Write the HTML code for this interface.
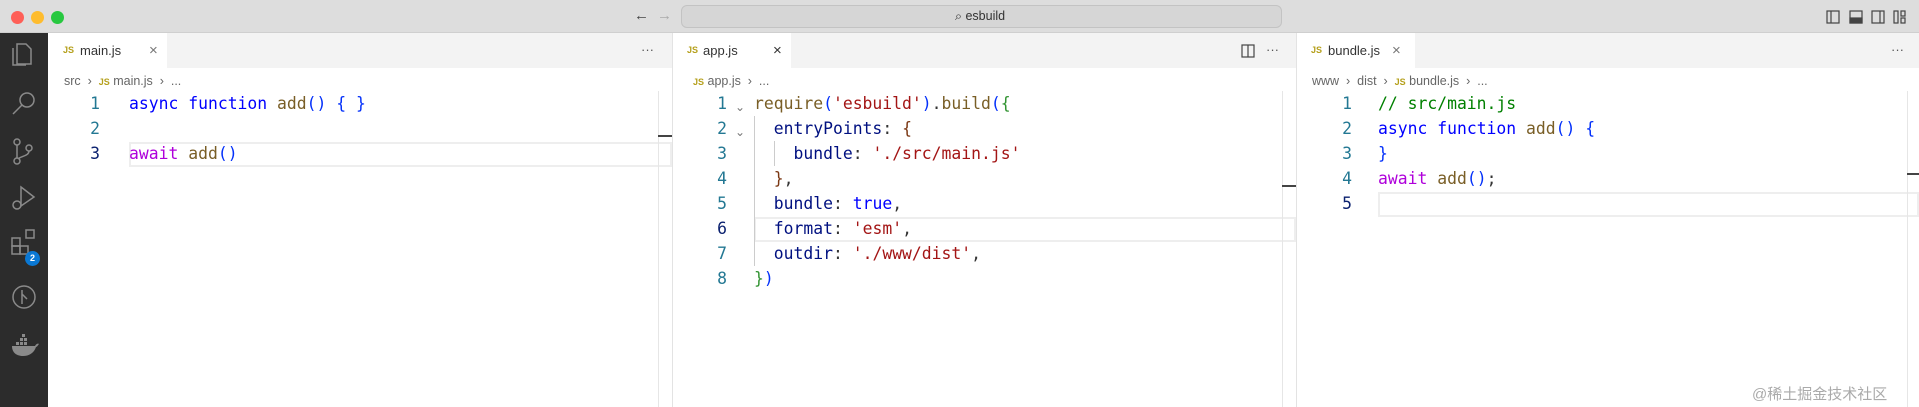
<!DOCTYPE html><html><head><meta charset="utf-8"><style>
*{margin:0;padding:0;box-sizing:border-box}
body{width:1919px;height:407px;overflow:hidden;background:#fff;position:relative;font-family:"Liberation Sans","Noto Sans CJK SC",sans-serif}
.a{position:absolute}
.tb{left:0;top:0;width:1919px;height:33px;background:#dddddd;border-bottom:1px solid #cfcfcf}
.dot{width:13px;height:13px;border-radius:50%;top:11px}
.act{left:0;top:33px;width:48px;height:374px;background:#2c2c2c}
.tabs{top:33px;height:35px;background:#f3f3f3}
.tab{top:33px;height:35px;background:#fff;font-size:13px;color:#333;line-height:35px}
.js{color:#b5a01c;font-size:9px;font-weight:bold;font-family:"Liberation Sans",sans-serif}
.x{color:#777;font-size:15px}
.bc{top:72px;font-size:12.5px;color:#666;line-height:18px;white-space:pre}
.code{font-family:"DejaVu Sans Mono",monospace;font-size:16.4px;white-space:pre;line-height:25px}
.ln{color:#237893;text-align:right;width:30px}
.k{color:#0000ff}.aw{color:#af00db}.f{color:#795e26}.b1{color:#0431fa}.b2{color:#319331}.b3{color:#7b3814}.s{color:#a31515}.p{color:#001080}.c{color:#008000}.t{color:#333}
.hl{border:2px solid #eeeeee;height:25px}
.vl{width:1px;background:#e6e6e6}
.dash{height:2px;background:#444;width:14px}
.sep{width:1px;background:#e3e3e3;top:33px;height:374px}
</style></head><body>
<div class="a tb"></div>
<div class="a dot" style="left:11px;background:#fe5f57"></div>
<div class="a dot" style="left:31px;background:#febc2e"></div>
<div class="a dot" style="left:51px;background:#28c840"></div>
<div class="a" style="left:634px;top:7px;font-size:15px;color:#444">←</div>
<div class="a" style="left:657px;top:7px;font-size:15px;color:#aaa">→</div>
<div class="a" style="left:681px;top:5px;width:601px;height:23px;border:1px solid #c3c3c3;border-radius:6px;background:#d6d6d6"></div>
<div class="a" style="left:955px;top:9px;font-size:12.5px;color:#333">⌕ esbuild</div>
<svg class="a" style="left:1826px;top:10px" width="90" height="14" fill="none" stroke="#444" stroke-width="1.2">
<rect x="1" y="1" width="12" height="12"/><line x1="5" y1="1" x2="5" y2="13"/>
<rect x="24" y="1" width="12" height="12"/><rect x="24" y="8" width="12" height="5" fill="#444"/>
<rect x="46" y="1" width="12" height="12"/><line x1="54" y1="1" x2="54" y2="13"/>
<rect x="68" y="1" width="4" height="12"/><rect x="75" y="1" width="4" height="5"/><rect x="75" y="8" width="4" height="5"/>
</svg>
<div class="a act"></div>
<svg class="a" style="left:0;top:33px" width="48" height="374" fill="none" stroke="#8a8a8a" stroke-width="1.5">
<path d="M17 11h9l5 5v15h-14z M13 15v17h13"/>
<circle cx="27" cy="67" r="7"/><path d="M22 72l-9 9"/>
<circle cx="17" cy="109" r="3"/><circle cx="17" cy="128" r="3"/><circle cx="29" cy="115" r="3"/><path d="M17 112v13 M29 118c0 5-8 5-11 8"/>
<path d="M21 154l13 10-13 9z"/><circle cx="17" cy="172" r="4"/>
<rect x="12" y="205" width="8" height="8"/><rect x="12" y="213" width="8" height="8"/><rect x="20" y="213" width="8" height="8"/><rect x="26" y="197" width="8" height="8"/>
<circle cx="24" cy="264" r="11"/><path d="M22 257v14 M22 261l5 5"/>
<g fill="#8a8a8a" stroke="none"><path d="M12 313h23c1-2 3-3 4-2c-1 1-2 3-3 3c-2 6-7 9-13 9c-6 0-11-3-11-10z"/><rect x="16" y="309" width="3" height="3"/><rect x="20" y="309" width="3" height="3"/><rect x="24" y="309" width="3" height="3"/><rect x="20" y="305" width="3" height="3"/><rect x="24" y="305" width="3" height="3"/><rect x="22" y="301" width="3" height="3"/></g>
</svg>
<div class="a" style="left:25px;top:251px;width:15px;height:15px;border-radius:50%;background:#0a78d4;color:#fff;font-size:9px;font-weight:bold;text-align:center;line-height:15px">2</div>

<!-- pane 1 -->
<div class="a tabs" style="left:48px;width:624px"></div>
<div class="a tab" style="left:48px;width:119px"><span class="a js" style="left:15px">JS</span><span class="a" style="left:32px">main.js</span><span class="a x" style="left:101px">×</span></div>
<div class="a" style="left:641px;top:42px;color:#555;font-size:13px">···</div>
<div class="a bc" style="left:64px">src  ›  <span class="js">JS</span> main.js  ›  ...</div>
<div class="a hl" style="left:129px;top:142px;width:543px"></div>
<div class="a code" style="left:70px;top:91px"><div class="ln">1
2
<span style="color:#0b216f">3</span></div></div>
<div class="a code" style="left:129px;top:91px"><span class="k">async</span> <span class="k">function</span> <span class="f">add</span><span class="b1">()</span> <span class="b1">{ }</span>

<span class="aw">await</span> <span class="f">add</span><span class="b1">()</span></div>
<div class="a vl" style="left:658px;top:91px;height:316px"></div>
<div class="a dash" style="left:658px;top:135px"></div>
<div class="a sep" style="left:672px"></div>

<!-- pane 2 -->
<div class="a tabs" style="left:673px;width:623px"></div>
<div class="a tab" style="left:673px;width:118px"><span class="a js" style="left:14px">JS</span><span class="a" style="left:30px">app.js</span><span class="a x" style="left:100px;color:#333">×</span></div>
<svg class="a" style="left:1241px;top:44px" width="14" height="14" fill="none" stroke="#444" stroke-width="1.2"><rect x="1" y="1" width="12" height="12"/><line x1="7" y1="1" x2="7" y2="13"/></svg>
<div class="a" style="left:1266px;top:42px;color:#555;font-size:13px">···</div>
<div class="a bc" style="left:693px"><span class="js">JS</span> app.js  ›  ...</div>
<div class="a hl" style="left:754px;top:217px;width:542px"></div>
<div class="a vl" style="left:754px;top:116px;height:150px;background:#ccc"></div>
<div class="a vl" style="left:774px;top:141px;height:25px;background:#ccc"></div>
<div class="a code" style="left:697px;top:91px"><div class="ln">1
2
3
4
5
<span style="color:#0b216f">6</span>
7
8</div></div>
<div class="a" style="left:735px;top:95px;color:#777;font-size:12px;line-height:25px">⌄<br>⌄</div>
<div class="a code" style="left:754px;top:91px"><span class="f">require</span><span class="b1">(</span><span class="s">'esbuild'</span><span class="b1">)</span><span class="t">.</span><span class="f">build</span><span class="b1">(</span><span class="b2">{</span>
  <span class="p">entryPoints</span><span class="t">:</span> <span class="b3">{</span>
    <span class="p">bundle</span><span class="t">:</span> <span class="s">'./src/main.js'</span>
  <span class="b3">}</span><span class="t">,</span>
  <span class="p">bundle</span><span class="t">:</span> <span class="k">true</span><span class="t">,</span>
  <span class="p">format</span><span class="t">:</span> <span class="s">'esm'</span><span class="t">,</span>
  <span class="p">outdir</span><span class="t">:</span> <span class="s">'./www/dist'</span><span class="t">,</span>
<span class="b2">}</span><span class="b1">)</span></div>
<div class="a vl" style="left:1282px;top:91px;height:316px"></div>
<div class="a dash" style="left:1282px;top:185px"></div>
<div class="a sep" style="left:1296px"></div>

<!-- pane 3 -->
<div class="a tabs" style="left:1297px;width:622px"></div>
<div class="a tab" style="left:1297px;width:118px"><span class="a js" style="left:14px">JS</span><span class="a" style="left:31px">bundle.js</span><span class="a x" style="left:95px">×</span></div>
<div class="a" style="left:1891px;top:42px;color:#555;font-size:13px">···</div>
<div class="a bc" style="left:1312px">www  ›  dist  ›  <span class="js">JS</span> bundle.js  ›  ...</div>
<div class="a hl" style="left:1378px;top:192px;width:541px"></div>
<div class="a code" style="left:1322px;top:91px"><div class="ln">1
2
3
4
<span style="color:#0b216f">5</span></div></div>
<div class="a code" style="left:1378px;top:91px"><span class="c">// src/main.js</span>
<span class="k">async</span> <span class="k">function</span> <span class="f">add</span><span class="b1">()</span> <span class="b1">{</span>
<span class="b1">}</span>
<span class="aw">await</span> <span class="f">add</span><span class="b1">()</span><span class="t">;</span></div>
<div class="a vl" style="left:1907px;top:91px;height:316px"></div>
<div class="a dash" style="left:1907px;top:173px;width:12px"></div>
<div class="a" style="left:1752px;top:383px;font-size:15px;color:#aaa">@稀土掘金技术社区</div>
</body></html>
